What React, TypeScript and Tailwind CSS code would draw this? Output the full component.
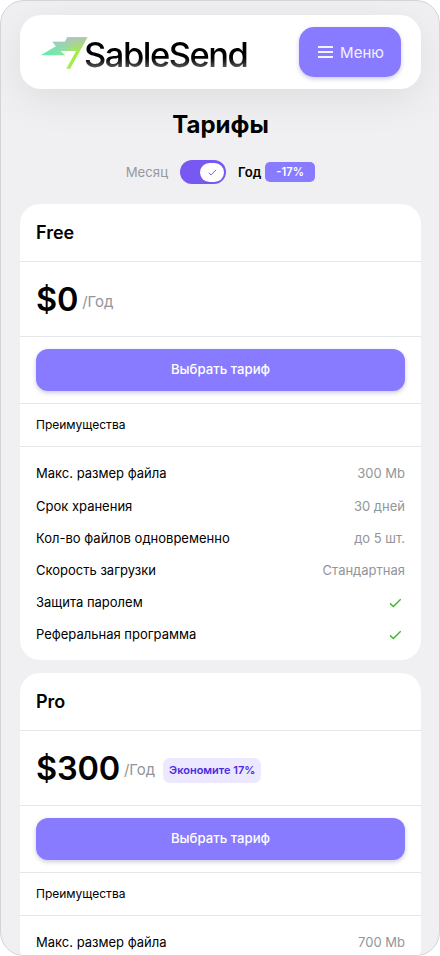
import { useState } from 'react'
import { clsx } from 'clsx'

type Feature = {
  label: string
  value: string | boolean
}

type Plan = {
  name: string
  price: string
  discount?: string
  features: Feature[]
}

const plans: Plan[] = [
  {
    name: 'Free',
    price: '$0',
    features: [
      { label: 'Макс. размер файла', value: '300 Mb' },
      { label: 'Срок хранения', value: '30 дней' },
      { label: 'Кол-во файлов одновременно', value: 'до 5 шт.' },
      { label: 'Скорость загрузки', value: 'Стандартная' },
      { label: 'Защита паролем', value: true },
      { label: 'Реферальная программа', value: true },
    ],
  },
  {
    name: 'Pro',
    price: '$300',
    discount: 'Экономите 17%',
    features: [{ label: 'Макс. размер файла', value: '700 Mb' }],
  },
]

const CheckIcon = ({ className }: { className?: string }) => (
  <svg viewBox="0 0 14 10" fill="none" stroke="currentColor" className={className}>
    <path d="M1.2 5.4 4.7 8.7 12.6 1" strokeWidth="1.5" />
  </svg>
)

const Logo = () => (
  <div className="flex items-start pt-[3px]">
    <svg width="48" height="34" viewBox="0 0 48 34" className="mt-[2.5px]">
      <defs>
        <linearGradient id="bolt" x1="4" y1="19" x2="36" y2="28" gradientUnits="userSpaceOnUse">
          <stop offset="0" stopColor="#62eeae" />
          <stop offset="0.5" stopColor="#86e6a0" />
          <stop offset="0.8" stopColor="#a8ea55" />
          <stop offset="1" stopColor="#9cf52e" />
        </linearGradient>
        <linearGradient id="haze" x1="32" y1="0" x2="32" y2="17" gradientUnits="userSpaceOnUse">
          <stop offset="0" stopColor="#b0bfc6" stopOpacity="0.9" />
          <stop offset="1" stopColor="#b0bfc6" stopOpacity="0" />
        </linearGradient>
      </defs>
      {['url(#bolt)', 'url(#haze)'].map((fill) => (
        <path
          key={fill}
          fill={fill}
          d="M0.7 18.2 16 9.2 12.3 4.7H25L27.3 0.2H47.4L30.2 31.8H26.3L36.1 14H20.4L25.4 18.2Z"
        />
      ))}
    </svg>
    <span className="mt-[3px] -ml-[4px] bg-linear-to-b from-black from-50% to-[#6c6c6c] to-90% bg-clip-text pr-1 text-[34.5px] leading-[36px] font-medium tracking-[-1.5px] text-transparent">
      SableSend
    </span>
  </div>
)

const Header = () => (
  <header className="flex h-[74px] items-center justify-between rounded-[21px] bg-white px-5 shadow-[0_10px_40px_rgba(0,0,0,0.08)]">
    <Logo />
    <button className="flex h-[50px] w-[102px] items-center justify-center gap-[7px] rounded-[15px] bg-[#887bff] pl-0.5 text-[15px] text-white/90 shadow-[0_2px_4px_rgba(60,50,120,0.25)]">
      <svg width="15" height="14" viewBox="0 0 15 14" stroke="currentColor" strokeWidth="1.9">
        <path d="M0 2H15M0 7H15M0 12H15" />
      </svg>
      <span className="pt-0.5">Меню</span>
    </button>
  </header>
)

const PlanCard = ({ plan }: { plan: Plan }) => (
  <section className="rounded-[20px] bg-white">
    <h2 className="flex h-[57.4px] items-center border-b border-[#e5e6e9] px-4 text-[18px] font-semibold">
      {plan.name}
    </h2>
    <div className="flex h-[75px] items-center border-b border-[#e5e6e9] px-4">
      <span className="pt-[3px] text-[32.5px] leading-none font-semibold tracking-[-0.2px]">{plan.price}</span>
      <span className="mt-[6px] ml-1 text-[15px] text-[#929599]">/Год</span>
      {plan.discount && (
        <span className="mt-[6px] ml-2 flex h-[25px] w-[98px] items-center justify-center rounded-[7px] bg-[#ece8ff] text-[11px] font-semibold whitespace-nowrap text-[#4b2bdc]">
          {plan.discount}
        </span>
      )}
    </div>
    <div className="h-[67px] border-b border-[#e5e6e9] px-4 pt-3">
      <button className="h-[42px] w-full rounded-[12px] bg-[#887bff] text-[13.2px] font-medium text-white shadow-[0_2px_4px_rgba(60,50,120,0.25)]">
        Выбрать тариф
      </button>
    </div>
    <div className="flex h-[43.6px] items-center border-b border-[#e5e6e9] px-4 text-[12px]">
      Преимущества
    </div>
    <ul className="px-4 pt-[10.6px] pb-[9.4px] text-[13px]">
      {plan.features.map(({ label, value }) => (
        <li key={label} className="flex h-[32.2px] items-center justify-between">
          <span>{label}</span>
          {typeof value === 'string' ? (
            <span className="text-[#929599]">{value}</span>
          ) : (
            <CheckIcon className="mr-[3px] h-[10px] w-[13px] text-[#3fb927]" />
          )}
        </li>
      ))}
    </ul>
  </section>
)

const App = () => {
  const [yearly, setYearly] = useState(true)

  return (
    <div className="h-[956px] w-[440px] overflow-hidden rounded-[24px] border border-[#d3d4d6] bg-[#f0f0f2] pt-[14px] pr-[18px] pl-[19px] font-['Inter',sans-serif] text-black">
      <Header />

      <h1 className="mt-[20px] text-center text-[24px] leading-[32px] font-bold">Тарифы</h1>

      <div className="mt-[19px] flex h-6 items-center justify-center text-[13.2px]">
        <span className="pt-px text-[#96989d]">Месяц</span>
        <button
          onClick={() => setYearly(!yearly)}
          className={clsx(
            'ml-3 flex h-6 w-[46px] items-center rounded-full bg-[#7758f3] px-[2px]',
            yearly ? 'justify-end' : 'justify-start'
          )}
        >
          <span className="flex h-[19px] w-6 items-center justify-center rounded-full bg-white">
            <CheckIcon className="h-[7px] w-[9px] text-[#7758f3]" />
          </span>
        </button>
        <span className="ml-3 pt-px font-semibold">Год</span>
        <span className="ml-[3.5px] flex h-5 w-[50.5px] items-center justify-center rounded-[5px] bg-[#887bff] pt-px text-[11.2px] font-semibold text-white">
          -17%
        </span>
      </div>

      <div className="mt-[20.4px] flex flex-col gap-[12.8px]">
        {plans.map((plan) => (
          <PlanCard key={plan.name} plan={plan} />
        ))}
      </div>
    </div>
  )
}

export default App
